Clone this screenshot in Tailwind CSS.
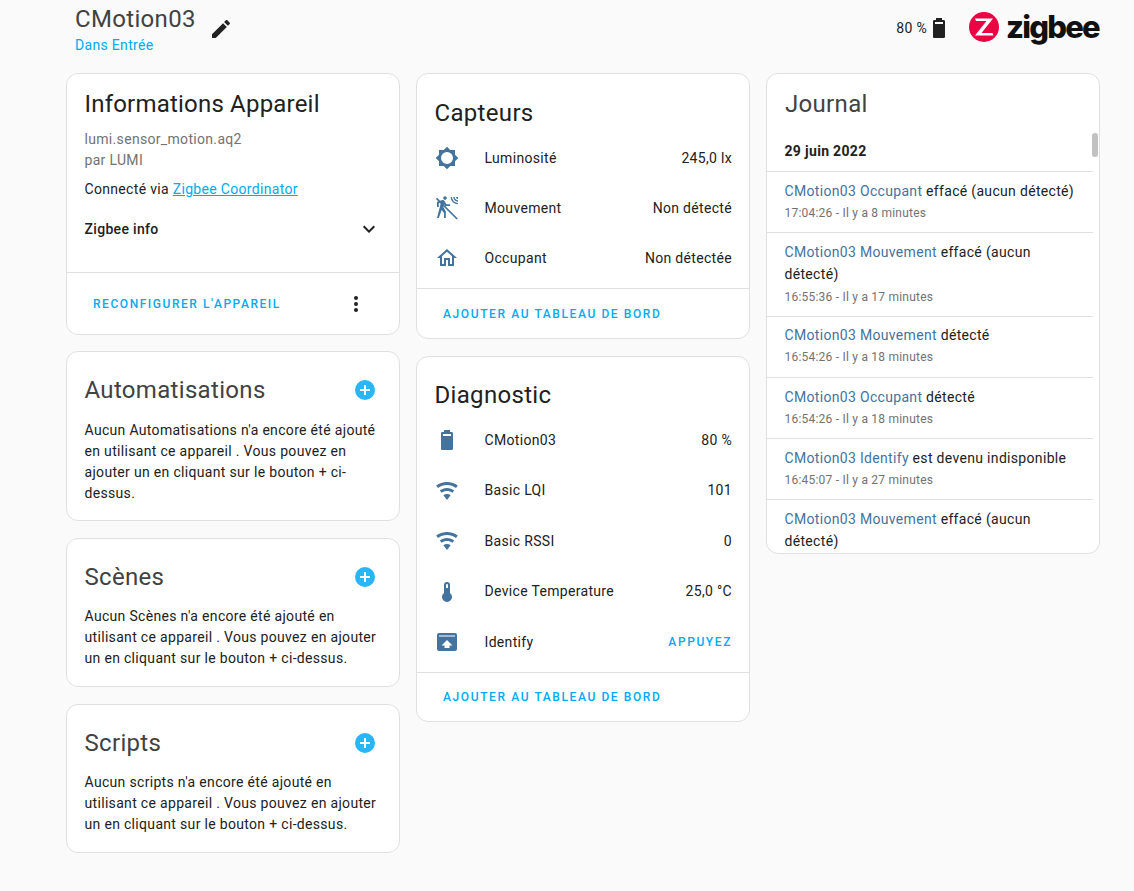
<!DOCTYPE html>
<html lang="fr">
<head>
  <meta charset="UTF-8">
  <title>CMotion03</title>
  <script src="https://cdn.jsdelivr.net/npm/@tailwindcss/browser@4"></script>
</head>
<body class="bg-[#fafafa] font-['Roboto',sans-serif] text-[14px] tracking-[0.32px] text-[#212121] h-[891px] overflow-hidden">
  <div class="w-[1034px] ml-[66px]">
    <!-- header -->
    <header class="h-[73px] flex items-start justify-between">
      <div class="flex items-start pl-[9px] pt-[3px]">
        <div>
          <h1 class="text-[24px] leading-[32px] text-[#424242]">CMotion03</h1>
          <a class="block text-[14px] leading-[20px] text-[#03a9f4]">Dans Entrée</a>
        </div>
        <svg class="w-6 h-6 ml-[13px] mt-[14px] fill-[#212121]" viewBox="0 0 24 24"><path d="M20.71,7.04C21.1,6.65 21.1,6 20.71,5.63L18.37,3.29C18,2.9 17.35,2.9 16.96,3.29L15.12,5.12L18.87,8.87M3,17.25V21H6.75L17.81,9.93L14.06,6.18L3,17.25Z"/></svg>
      </div>
      <div class="flex items-center pt-[14px]">
        <span class="text-[14px]">80 %</span>
        <svg class="w-6 h-6 fill-[#212121]" viewBox="0 0 24 24"><path d="M16,8H8V6H16M16.67,4H15V2H9V4H7.33A1.33,1.33 0 0,0 6,5.33V20.66C6,21.4 6.6,22 7.33,22H16.67A1.33,1.33 0 0,0 18,20.66V5.33C18,4.6 17.4,4 16.67,4Z"/></svg>
        <svg class="w-[30px] h-[30px] ml-[18px] mt-[-2px]" viewBox="0 0 30 30"><circle cx="15" cy="15" r="15" fill="#eb0443"/><path d="M6 6.5H24L12.5 21H23.5L24.5 23.5H6L17.5 9H7Z" fill="#fff"/></svg>
        <span class="ml-[7px] w-[94px] text-[31px] leading-[30px] font-extrabold font-['Inter',sans-serif] tracking-[-1.8px] text-[#111] mt-[-3px]">zigbee</span>
      </div>
    </header>

    <div class="grid grid-cols-[334px_334px_334px] gap-x-[16px] items-start">
      <!-- left column -->
      <div class="flex flex-col">
        <section class="h-[262px] bg-white border border-[#e0e0e0] rounded-xl flex flex-col">
          <div class="pl-[17.5px] pr-[18px] pt-[14px] flex-1">
            <h2 class="text-[24px] tracking-[0.2px] leading-[32px]">Informations Appareil</h2>
            <p class="mt-[9px] leading-[21px] text-[#727272]">lumi.sensor_motion.aq2</p>
            <p class="leading-[21px] text-[#727272]">par LUMI</p>
            <p class="mt-[8px] leading-[20px]">Connecté via <a class="text-[#03a9f4] underline">Zigbee Coordinator</a></p>
            <div class="mt-[10px] h-[40px] flex items-center justify-between font-medium">
              <span>Zigbee info</span>
              <svg class="w-6 h-6 fill-[#212121]" viewBox="0 0 24 24"><path d="M7.41,8.58L12,13.17L16.59,8.58L18,10L12,16L6,10L7.41,8.58Z"/></svg>
            </div>
          </div>
          <div class="h-[62px] border-t border-[#e0e0e0] flex items-center justify-between pl-[26px] pr-[31px]">
            <span class="text-[12px] font-medium tracking-[1.55px] text-[#03a9f4]">RECONFIGURER L'APPAREIL</span>
            <svg class="w-6 h-6 fill-[#212121]" viewBox="0 0 24 24"><path d="M12,16A2,2 0 0,1 14,18A2,2 0 0,1 12,20A2,2 0 0,1 10,18A2,2 0 0,1 12,16M12,10A2,2 0 0,1 14,12A2,2 0 0,1 12,14A2,2 0 0,1 10,12A2,2 0 0,1 12,10M12,4A2,2 0 0,1 14,6A2,2 0 0,1 12,8A2,2 0 0,1 10,6A2,2 0 0,1 12,4Z"/></svg>
          </div>
        </section>

        <section class="mt-[16px] h-[170px] bg-white border border-[#e0e0e0] rounded-xl pl-[17.5px] pr-[18px] pt-[22px]">
          <div class="flex items-center justify-between h-[32px]">
            <h2 class="text-[24px] leading-[32px] text-[#424242]">Automatisations</h2>
            <svg class="w-6 h-6 mr-[4px] fill-[#29b6f6]" viewBox="0 0 24 24"><path d="M17,13H13V17H11V13H7V11H11V7H13V11H17M12,2A10,10 0 0,0 2,12A10,10 0 0,0 12,22A10,10 0 0,0 22,12A10,10 0 0,0 12,2Z"/></svg>
          </div>
          <p class="mt-[14px] leading-[21px]">Aucun Automatisations n'a encore été ajouté en utilisant ce appareil . Vous pouvez en ajouter un en cliquant sur le bouton + ci-dessus.</p>
        </section>

        <section class="mt-[17px] h-[149px] bg-white border border-[#e0e0e0] rounded-xl pl-[17.5px] pr-[18px] pt-[22px]">
          <div class="flex items-center justify-between h-[32px]">
            <h2 class="text-[24px] leading-[32px] text-[#424242]">Scènes</h2>
            <svg class="w-6 h-6 mr-[4px] fill-[#29b6f6]" viewBox="0 0 24 24"><path d="M17,13H13V17H11V13H7V11H11V7H13V11H17M12,2A10,10 0 0,0 2,12A10,10 0 0,0 12,22A10,10 0 0,0 22,12A10,10 0 0,0 12,2Z"/></svg>
          </div>
          <p class="mt-[13px] leading-[21px]">Aucun Scènes n'a encore été ajouté en utilisant ce appareil . Vous pouvez en ajouter un en cliquant sur le bouton + ci-dessus.</p>
        </section>

        <section class="mt-[17px] h-[149px] bg-white border border-[#e0e0e0] rounded-xl pl-[17.5px] pr-[18px] pt-[22px]">
          <div class="flex items-center justify-between h-[32px]">
            <h2 class="text-[24px] leading-[32px] text-[#424242]">Scripts</h2>
            <svg class="w-6 h-6 mr-[4px] fill-[#29b6f6]" viewBox="0 0 24 24"><path d="M17,13H13V17H11V13H7V11H11V7H13V11H17M12,2A10,10 0 0,0 2,12A10,10 0 0,0 12,22A10,10 0 0,0 22,12A10,10 0 0,0 12,2Z"/></svg>
          </div>
          <p class="mt-[13px] leading-[21px]">Aucun scripts n'a encore été ajouté en utilisant ce appareil . Vous pouvez en ajouter un en cliquant sur le bouton + ci-dessus.</p>
        </section>
      </div>

      <!-- middle column -->
      <div class="flex flex-col">
        <section class="h-[266px] bg-white border border-[#e0e0e0] rounded-xl flex flex-col">
          <h2 class="pl-[17.5px] pt-[23px] text-[24px] leading-[32px]">Capteurs</h2>
          <div class="flex-1 pl-[17.5px] pr-[17px] pt-[4px]">
            <div class="h-[50px] flex items-center">
              <svg class="w-6 h-6 fill-[#44739e]" viewBox="0 0 24 24"><path d="M20,15.31L23.31,12L20,8.69V4H15.31L12,0.69L8.69,4H4V8.69L0.69,12L4,15.31V20H8.69L12,23.31L15.31,20H20V15.31M12,18A6,6 0 0,1 6,12A6,6 0 0,1 12,6A6,6 0 0,1 18,12A6,6 0 0,1 12,18Z"/></svg>
              <span class="ml-[26px] flex-1">Luminosité</span><span>245,0 lx</span>
            </div>
            <div class="h-[50px] flex items-center">
              <svg class="w-6 h-6 fill-[#44739e]" viewBox="0 0 24 24"><path d="M10,0.2C9,0.2 8.2,1 8.2,2C8.2,3 9,3.8 10,3.8C11,3.8 11.8,3 11.8,2C11.8,1 11,0.2 10,0.2M15.67,1A7.33,7.33 0 0,0 23,8.33V7A6,6 0 0,1 17,1H15.67M18.33,1C18.33,3.58 20.42,5.67 23,5.67V4.33C21.16,4.33 19.67,2.84 19.67,1H18.33M21,1A2,2 0 0,0 23,3V1H21M7.92,4.03C7.75,4.03 7.58,4.06 7.42,4.11L2,5.8V11H3.8V7.33L5.91,6.67L2,22H3.8L6.67,13.89L9,17V22H10.8V15.59L8.31,11.05L9.04,8.18L10.12,10H15V8.2H11.38L9.38,4.87C9.08,4.37 8.54,4.03 7.92,4.03Z"/><path d="M1.5,2.3L22.2,23" stroke="#44739e" stroke-width="1.7" fill="none"/></svg>
              <span class="ml-[26px] flex-1">Mouvement</span><span>Non détecté</span>
            </div>
            <div class="h-[50px] flex items-center">
              <svg class="w-6 h-6 fill-[#44739e]" viewBox="0 0 24 24"><path d="M12 5.69L17 10.19V18H15V12H9V18H7V10.19L12 5.69M12 3L2 12H5V20H11V14H13V20H19V12H22L12 3Z"/></svg>
              <span class="ml-[26px] flex-1">Occupant</span><span>Non détectée</span>
            </div>
          </div>
          <div class="h-[50px] border-t border-[#e0e0e0] flex items-center pl-[26px]">
            <span class="text-[12px] font-medium tracking-[1.6px] text-[#03a9f4]">AJOUTER AU TABLEAU DE BORD</span>
          </div>
        </section>

        <section class="mt-[17px] h-[366px] bg-white border border-[#e0e0e0] rounded-xl flex flex-col">
          <h2 class="pl-[17.5px] pt-[22px] text-[24px] leading-[32px]">Diagnostic</h2>
          <div class="flex-1 pl-[17.5px] pr-[17px] pt-[4px]">
            <div class="h-[50.5px] flex items-center">
              <svg class="w-6 h-6 fill-[#44739e]" viewBox="0 0 24 24"><path d="M16,8H8V6H16M16.67,4H15V2H9V4H7.33A1.33,1.33 0 0,0 6,5.33V20.66C6,21.4 6.6,22 7.33,22H16.67A1.33,1.33 0 0,0 18,20.66V5.33C18,4.6 17.4,4 16.67,4Z"/></svg>
              <span class="ml-[26px] flex-1">CMotion03</span><span>80 %</span>
            </div>
            <div class="h-[50.5px] flex items-center">
              <svg class="w-6 h-6 fill-[#44739e]" viewBox="0 0 24 24"><path d="M12,21L15.6,16.2C14.6,15.45 13.35,15 12,15C10.65,15 9.4,15.45 8.4,16.2L12,21M12,3C7.95,3 4.21,4.34 1.2,6.6L3,9C5.5,7.12 8.62,6 12,6C15.38,6 18.5,7.12 21,9L22.8,6.6C19.79,4.34 16.05,3 12,3M12,9C9.3,9 6.81,9.89 4.8,11.4L6.6,13.8C8.1,12.67 9.97,12 12,12C14.03,12 15.9,12.67 17.4,13.8L19.2,11.4C17.19,9.89 14.7,9 12,9Z"/></svg>
              <span class="ml-[26px] flex-1">Basic LQI</span><span>101</span>
            </div>
            <div class="h-[50.5px] flex items-center">
              <svg class="w-6 h-6 fill-[#44739e]" viewBox="0 0 24 24"><path d="M12,21L15.6,16.2C14.6,15.45 13.35,15 12,15C10.65,15 9.4,15.45 8.4,16.2L12,21M12,3C7.95,3 4.21,4.34 1.2,6.6L3,9C5.5,7.12 8.62,6 12,6C15.38,6 18.5,7.12 21,9L22.8,6.6C19.79,4.34 16.05,3 12,3M12,9C9.3,9 6.81,9.89 4.8,11.4L6.6,13.8C8.1,12.67 9.97,12 12,12C14.03,12 15.9,12.67 17.4,13.8L19.2,11.4C17.19,9.89 14.7,9 12,9Z"/></svg>
              <span class="ml-[26px] flex-1">Basic RSSI</span><span>0</span>
            </div>
            <div class="h-[50.5px] flex items-center">
              <svg class="w-6 h-6 fill-[#44739e]" viewBox="0 0 24 24"><path d="M15 13V5A3 3 0 0 0 9 5V13A5 5 0 1 0 15 13M12 4A1 1 0 0 1 13 5V8H11V5A1 1 0 0 1 12 4Z"/></svg>
              <span class="ml-[26px] flex-1">Device Temperature</span><span>25,0 °C</span>
            </div>
            <div class="h-[50.5px] flex items-center">
              <svg class="w-6 h-6 fill-[#44739e]" viewBox="0 0 24 24"><path fill-rule="evenodd" d="M4 3H20A2 2 0 0 1 22 5V19A2 2 0 0 1 20 21H4A2 2 0 0 1 2 19V5A2 2 0 0 1 4 3ZM4 5.5V6.5H20V5.5ZM12 10L6.5 15.5H9.5V18H14.5V15.5H17.5Z"/></svg>
              <span class="ml-[26px] flex-1">Identify</span><span class="text-[12px] font-medium tracking-[1.6px] text-[#03a9f4]">APPUYEZ</span>
            </div>
          </div>
          <div class="h-[49px] border-t border-[#e0e0e0] flex items-center pl-[26px]">
            <span class="text-[12px] font-medium tracking-[1.6px] text-[#03a9f4]">AJOUTER AU TABLEAU DE BORD</span>
          </div>
        </section>
      </div>

      <!-- journal -->
      <section class="relative h-[481px] bg-white border border-[#e0e0e0] rounded-xl overflow-hidden">
        <h2 class="px-[18px] pt-[14px] text-[24px] leading-[32px] text-[#424242]">Journal</h2>
        <span class="absolute right-[1px] top-[59px] w-[6px] h-[24px] rounded-full bg-[#c1c1c1]"></span>
        <div class="mr-[6px]">
          <h3 class="px-[17.5px] pt-[21px] h-[51px] leading-[20px] font-bold">29 juin 2022</h3>
          <div class="border-t border-[#e0e0e0] pl-[17.5px] pr-[16px] pt-[9px] h-[61px]">
            <p class="leading-[20px]"><span class="text-[#44739e]">CMotion03 Occupant</span> effacé (aucun détecté)</p>
            <p class="mt-[3px] text-[12px] tracking-[0.22px] leading-[18px] text-[#727272]">17:04:26 - Il y a 8 minutes</p>
          </div>
          <div class="border-t border-[#e0e0e0] pl-[17.5px] pr-[16px] pt-[8px] h-[84px]">
            <p class="leading-[22px]"><span class="text-[#44739e]">CMotion03 Mouvement</span> <span>effacé (aucun</span><br><span>détecté)</span></p>
            <p class="mt-[3px] text-[12px] tracking-[0.22px] leading-[18px] text-[#727272]">16:55:36 - Il y a 17 minutes</p>
          </div>
          <div class="border-t border-[#e0e0e0] pl-[17.5px] pr-[16px] pt-[8px] h-[61px]">
            <p class="leading-[20px]"><span class="text-[#44739e]">CMotion03 Mouvement</span> détecté</p>
            <p class="mt-[3px] text-[12px] tracking-[0.22px] leading-[18px] text-[#727272]">16:54:26 - Il y a 18 minutes</p>
          </div>
          <div class="border-t border-[#e0e0e0] pl-[17.5px] pr-[16px] pt-[9px] h-[61px]">
            <p class="leading-[20px]"><span class="text-[#44739e]">CMotion03 Occupant</span> détecté</p>
            <p class="mt-[3px] text-[12px] tracking-[0.22px] leading-[18px] text-[#727272]">16:54:26 - Il y a 18 minutes</p>
          </div>
          <div class="border-t border-[#e0e0e0] pl-[17.5px] pr-[16px] pt-[9px] h-[61px]">
            <p class="leading-[20px]"><span class="text-[#44739e]">CMotion03 Identify</span> est devenu indisponible</p>
            <p class="mt-[3px] text-[12px] tracking-[0.22px] leading-[18px] text-[#727272]">16:45:07 - Il y a 27 minutes</p>
          </div>
          <div class="border-t border-[#e0e0e0] pl-[17.5px] pr-[16px] pt-[8px]">
            <p class="leading-[22px]"><span class="text-[#44739e]">CMotion03 Mouvement</span> <span>effacé (aucun</span><br><span>détecté)</span></p>
          </div>
        </div>
      </section>
    </div>
  </div>
</body>
</html>
